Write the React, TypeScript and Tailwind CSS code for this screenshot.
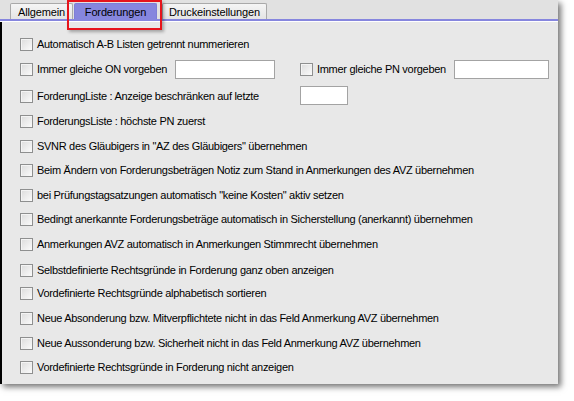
import React from "react"

const font = { fontFamily: '"Liberation Sans", Arial, sans-serif' }

interface RowProps {
  label: string
  className?: string
}

function Box() {
  return (
    <span className="h-[13px] w-[13px] shrink-0 border border-[#8e8f8f] bg-gradient-to-br from-[#dcdcdc] to-[#fbfbfb] shadow-[inset_1px_1px_0_#f4f4f4]" />
  )
}

function Field({ className = "" }: { className?: string }) {
  return <span className={`block h-[19px] shrink-0 border border-[#a3a3a3] bg-white ${className}`} />
}

function Row({ label, className = "" }: RowProps) {
  return (
    <div className={`flex h-[13px] items-center ${className}`}>
      <Box />
      <span className="ml-[4px] whitespace-nowrap">{label}</span>
    </div>
  )
}

const rows: RowProps[] = [
  { label: "SVNR des Gläubigers in \"AZ des Gläubigers\" übernehmen", className: "mt-[12px]" },
  { label: "Beim Ändern von Forderungsbeträgen Notiz zum Stand in Anmerkungen des AVZ übernehmen", className: "mt-[11px]" },
  { label: "bei Prüfungstagsatzungen automatisch \"keine Kosten\" aktiv setzen", className: "mt-[12px]" },
  { label: "Bedingt anerkannte Forderungsbeträge automatisch in Sicherstellung (anerkannt) übernehmen", className: "mt-[11px]" },
  { label: "Anmerkungen AVZ automatisch in Anmerkungen Stimmrecht übernehmen", className: "mt-[12px]" },
  { label: "Selbstdefinierte Rechtsgründe in Forderung ganz oben anzeigen", className: "mt-[13px]" },
  { label: "Vordefinierte Rechtsgründe alphabetisch sortieren", className: "mt-[10px]" },
  { label: "Neue Absonderung bzw. Mitverpflichtete nicht in das Feld Anmerkung AVZ übernehmen", className: "mt-[12px]" },
  { label: "Neue Aussonderung bzw. Sicherheit nicht in das Feld Anmerkung AVZ übernehmen", className: "mt-[12px]" },
  { label: "Vordefinierte Rechtsgründe in Forderung nicht anzeigen", className: "mt-[11px]" },
]

export default function App() {
  return (
    <div className="relative h-[401px] w-[574px] overflow-hidden bg-white text-[11px] tracking-[-0.3px] text-black" style={font}>
      <div className="flex h-[384px] w-[558px] flex-col bg-[#e1e1e1] shadow-[3px_3px_6px_rgba(0,0,0,0.55)]">
        {/* tab strip */}
        <div className="flex h-[19px] items-end pl-[10px] tracking-[-0.15px]">
          <div className="flex h-[16px] w-[63px] items-center justify-center rounded-t-[2px] border border-b-0 border-[#a9a9a9] bg-gradient-to-b from-[#f5f5f5] to-[#e4e4e4] pt-[1px]">
            Allgemein
          </div>
          <div className="ml-[1px] flex h-[16px] w-[83px] items-center justify-center rounded-t-[2px] border border-b-0 border-[#7e7ed6] bg-[#8686de] pt-[1px]">
            Forderungen
          </div>
          <div className="ml-[5px] flex h-[16px] w-[105px] items-center justify-center rounded-t-[2px] border border-b-0 border-[#a9a9a9] bg-gradient-to-b from-[#f5f5f5] to-[#e4e4e4] pt-[1px]">
            Druckeinstellungen
          </div>
        </div>
        <div className="h-[2px] bg-[#8686de]" />
        <div className="h-[1px] bg-white" />

        {/* page */}
        <div className="flex flex-1 flex-col border-l-2 border-black bg-[#e8e8e8] pl-[18px] pt-[16px]">
          <Row label="Automatisch A-B Listen getrennt nummerieren" />

          <div className="mt-[12px] flex h-[13px] items-center">
            <div className="flex w-[155px] items-center">
              <Box />
              <span className="ml-[4px] whitespace-nowrap">Immer gleiche ON vorgeben</span>
            </div>
            <Field className="w-[100px]" />
            <div className="ml-[25px] flex w-[154px] items-center">
              <Box />
              <span className="ml-[4px] whitespace-nowrap">Immer gleiche PN vorgeben</span>
            </div>
            <Field className="w-[95px]" />
          </div>

          <div className="mt-[14px] flex h-[13px] items-center">
            <div className="flex w-[280px] items-center">
              <Box />
              <span className="ml-[4px] whitespace-nowrap">ForderungListe : Anzeige beschränken auf letzte</span>
            </div>
            <Field className="-mt-[3px] w-[48px]" />
          </div>

          <Row label="ForderungsListe : höchste PN zuerst" className="mt-[12px]" />

          {rows.map((r) => (
            <Row key={r.label} label={r.label} className={r.className} />
          ))}
        </div>
      </div>

      {/* highlight around the active tab */}
      <div className="absolute left-[67px] top-0 h-[30px] w-[95px] border-2 border-[#e6141c] shadow-[2px_2px_3px_rgba(0,0,0,0.3)]" />
    </div>
  )
}
